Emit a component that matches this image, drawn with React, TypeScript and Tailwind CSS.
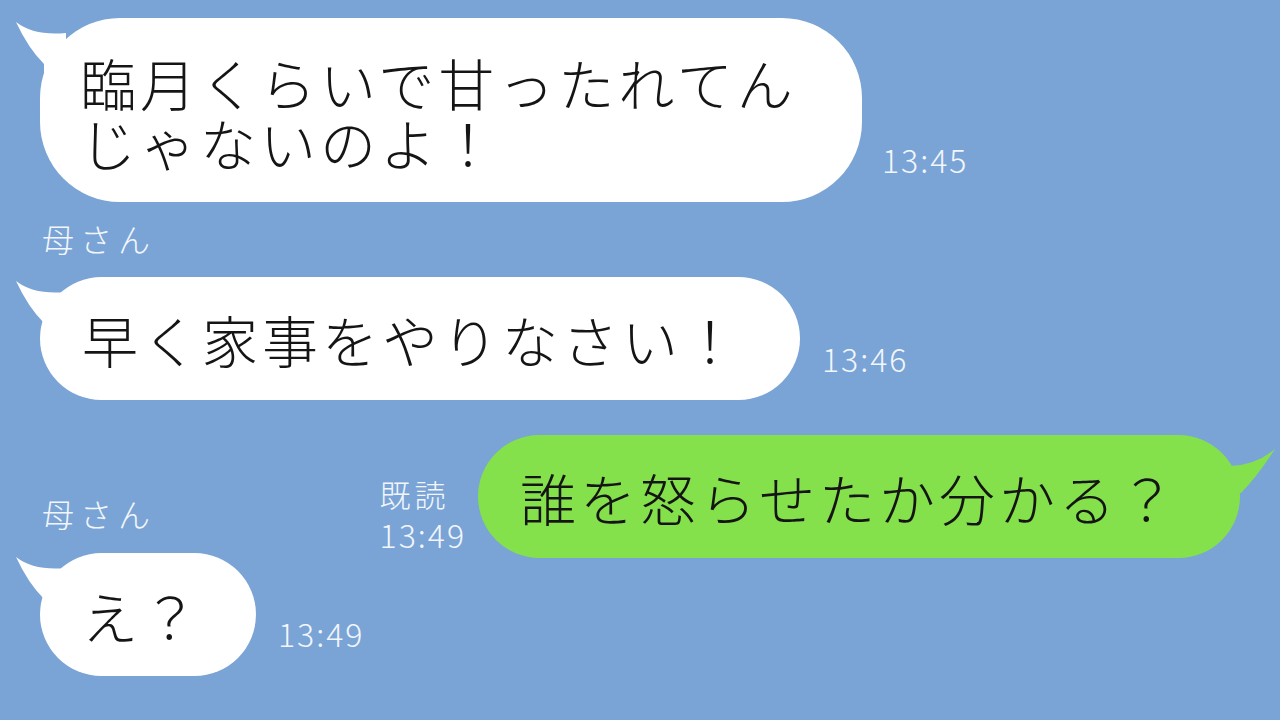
import React from "react";

const jp = { fontFamily: '"Noto Sans CJK JP", "Noto Sans", sans-serif' };

function TailLeft({ color }: { color: string }) {
  return (
    <svg
      className="absolute left-[-26px] top-0"
      width="70"
      height="70"
      viewBox="0 0 70 70"
    >
      <path
        d="M2,4 Q20,18 52,15 L52,70 L30,70 L30,46 Q14,30 2,4 Z"
        fill={color}
      />
    </svg>
  );
}

function TailRight({ color }: { color: string }) {
  return (
    <svg
      className="absolute right-[-40px] top-0"
      width="70"
      height="70"
      viewBox="0 0 70 70"
    >
      <path
        d="M65,14 Q46,30 20,31 L8,36 L8,58 L31,58 Q47,42 65,14 Z"
        fill={color}
      />
    </svg>
  );
}

function Time({ children }: { children: React.ReactNode }) {
  return (
    <div className="text-[32px] leading-[40px] font-light tracking-[2px] text-[#f2f6fb]">
      {children}
    </div>
  );
}

export default function App() {
  return (
    <div
      className="w-[1280px] h-[720px] bg-[#7aa4d6] overflow-hidden flex flex-col"
      style={jp}
    >
      {/* message 1 */}
      <div className="flex items-end pl-[40px] pt-[18px]">
        <div className="relative w-[822px] h-[184px] rounded-[80px] bg-white pl-[40px] pt-[34px]">
          <TailLeft color="#ffffff" />
          <div className="relative text-[56px] leading-[60px] tracking-[4px] text-[#151515] font-light">
            <div>臨月くらいで甘ったれてん</div>
            <div>じゃないのよ！</div>
          </div>
        </div>
        <div className="ml-[20px] mb-[23px]">
          <Time>13:45</Time>
        </div>
      </div>

      {/* name */}
      <div className="pl-[42px] mt-[18px] text-[32px] leading-[36px] tracking-[6px] text-[#f2f6fb] font-light">
        母さん
      </div>

      {/* message 2 */}
      <div className="flex items-end pl-[40px] mt-[21px]">
        <div className="relative w-[760px] h-[123px] rounded-[62px] bg-white pl-[42px] flex items-center">
          <TailLeft color="#ffffff" />
          <div className="relative text-[56px] leading-[60px] tracking-[4px] text-[#151515] font-light">
            早く家事をやりなさい！
          </div>
        </div>
        <div className="ml-[22px] mb-[22px]">
          <Time>13:46</Time>
        </div>
      </div>

      {/* my message */}
      <div className="flex items-end justify-end pr-[40px] mt-[35px]">
        <div className="mr-[12px] mb-[4px] flex flex-col text-[#f2f6fb] font-light">
          <div className="text-[31px] leading-[40px] tracking-[4px]">既読</div>
          <Time>13:49</Time>
        </div>
        <div className="relative w-[762px] h-[123px] rounded-[62px] bg-[#85e14b] pl-[42px] flex items-center">
          <TailRight color="#85e14b" />
          <div className="relative text-[56px] leading-[60px] tracking-[4px] text-[#151515] font-light">
            誰を怒らせたか分かる？
          </div>
        </div>
      </div>

      {/* name */}
      <div className="pl-[42px] mt-[-63px] text-[32px] leading-[36px] tracking-[6px] text-[#f2f6fb] font-light">
        母さん
      </div>

      {/* message 3 */}
      <div className="flex items-end pl-[40px] mt-[22px]">
        <div className="relative w-[216px] h-[123px] rounded-[62px] bg-white pl-[42px] flex items-center">
          <TailLeft color="#ffffff" />
          <div className="relative text-[56px] leading-[60px] tracking-[4px] text-[#151515] font-light">
            え？
          </div>
        </div>
        <div className="ml-[22px] mb-[23px]">
          <Time>13:49</Time>
        </div>
      </div>
    </div>
  );
}
